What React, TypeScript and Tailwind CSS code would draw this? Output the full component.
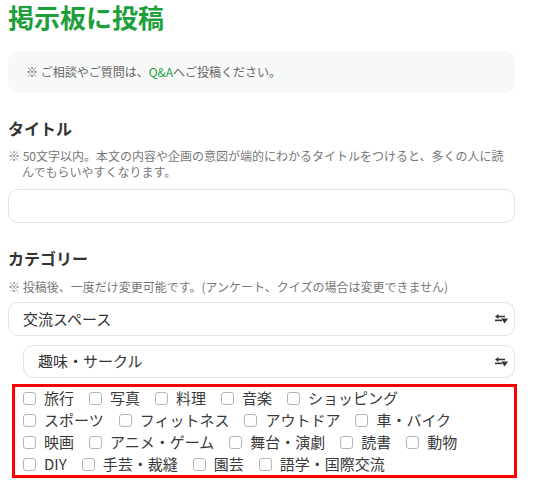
import React from "react";

const font = { fontFamily: '"Noto Sans CJK JP", "Noto Sans", sans-serif' };

const rows: string[][] = [
  ["旅行", "写真", "料理", "音楽", "ショッピング"],
  ["スポーツ", "フィットネス", "アウトドア", "車・バイク"],
  ["映画", "アニメ・ゲーム", "舞台・演劇", "読書", "動物"],
  ["DIY", "手芸・裁縫", "園芸", "語学・国際交流"],
];

function SortIcon() {
  return (
    <svg width="13" height="10" viewBox="0 0 13 10" className="shrink-0">
      <path d="M0 2.5 L3.5 0 L3.5 1.7 L10 1.7 L10 3.3 L3.5 3.3 L3.5 5 Z" fill="#333" />
      <rect x="0" y="5.6" width="7" height="1.6" fill="#333" />
      <path d="M6.2 4.4 L13 4.4 L9.6 9.5 Z" fill="#333" />
    </svg>
  );
}

export default function App() {
  return (
    <div className="bg-white w-[533px] h-[480px] overflow-hidden" style={font}>
      <div className="ml-[8px] w-[507px]">
        <h1 className="pt-[1px] text-[26px] leading-[32px] font-bold text-[#1e9f3c]">掲示板に投稿</h1>

        <div className="mt-[18px] h-[42px] rounded-[10px] bg-[#f7f8f8] flex items-center pl-[18px] text-[12px] text-[#666]">
          <span>※ ご相談やご質問は、<span className="text-[#1e9f3c]">Q&amp;A</span>へご投稿ください。</span>
        </div>

        <h2 className="mt-[24px] text-[16px] leading-[22px] font-bold text-[#333]">タイトル</h2>
        <p className="mt-[9px] text-[12px] leading-[16px] text-[#777] pl-[14px] -indent-[14px]">
          ※ 50文字以内。本文の内容や企画の意図が端的にわかるタイトルをつけると、多くの人に読<br />んでもらいやすくなります。
        </p>
        <div className="mt-[9px] h-[34px] rounded-[10px] border-[1.5px] border-[#dfe3e3] bg-white"></div>

        <h2 className="mt-[24px] text-[16px] leading-[22px] font-bold text-[#333]">カテゴリー</h2>
        <p className="mt-[10px] text-[12px] leading-[15px] text-[#777]">
          ※ 投稿後、一度だけ変更可能です。(アンケート、クイズの場合は変更できません)
        </p>

        <div className="mt-[8px] h-[34px] rounded-[10px] border-[1.5px] border-[#dfe3e3] flex items-center pl-[14px] pr-[6px] justify-between">
          <span className="text-[15px] text-[#333]">交流スペース</span>
          <SortIcon />
        </div>
        <div className="mt-[9px] ml-[15px] h-[33px] rounded-[10px] border-[1.5px] border-[#dfe3e3] flex items-center pl-[14px] pr-[6px] justify-between">
          <span className="text-[15px] text-[#333]">趣味・サークル</span>
          <SortIcon />
        </div>
      </div>

      <div className="mt-[6px] ml-[12px] w-[505px] border-[3px] border-[#ff0000] pl-[8px]">
        {rows.map((row, i) => (
          <div key={i} className="h-[22px] flex items-center gap-[15px]">
            {row.map((label) => (
              <label key={label} className="flex items-center">
                <span className="w-[13px] h-[13px] rounded-[3px] border border-[#b5b5b5] bg-white shrink-0"></span>
                <span className="ml-[8px] text-[15px] leading-[22px] text-[#3a3a3a]">{label}</span>
              </label>
            ))}
          </div>
        ))}
      </div>
    </div>
  );
}
